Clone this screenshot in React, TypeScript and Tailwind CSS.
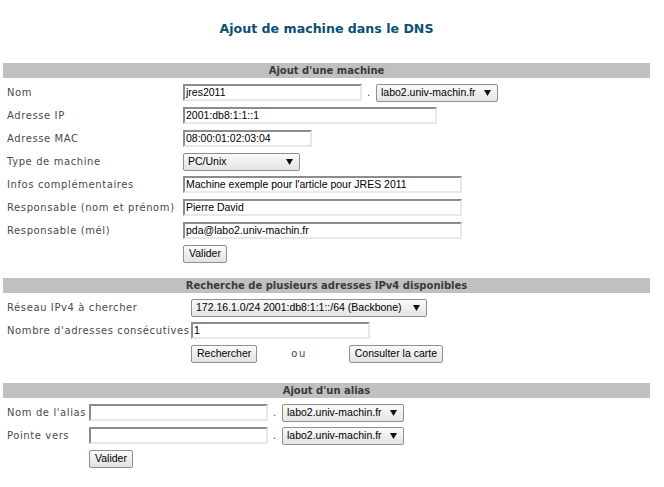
import React from "react";

const label = "text-[10px] tracking-[0.6px] text-[#4a4a4a] [font-family:'DejaVu_Sans',sans-serif]";
const field = "text-[10.5px] text-black [font-family:'Liberation_Sans',Arial,sans-serif]";

function Bar({ title, className = "" }: { title: string; className?: string }) {
  return (
    <div
      className={`h-[15px] bg-[#c0c0c0] text-center text-[10px] font-bold leading-[15px] text-[#3a3a3a] [font-family:'DejaVu_Sans',sans-serif] ${className}`}
    >
      {title}
    </div>
  );
}

function TextInput({ value = "", w }: { value?: string; w: string }) {
  return (
    <div
      className={`h-[17px] ${w} border-2 border-t-[#8c8c8c] border-l-[#8c8c8c] border-b-[#e8e8e8] border-r-[#e8e8e8] bg-white pl-[1px] leading-[13px] ${field}`}
    >
      {value}
    </div>
  );
}

function Select({ value, w }: { value: string; w: string }) {
  return (
    <div
      className={`flex h-[18px] ${w} items-center justify-between rounded-[2px] border border-[#8f8f8f] bg-gradient-to-b from-[#fafafa] to-[#e4e4e4] pl-[4px] pr-[6px] ${field}`}
    >
      <span className="whitespace-nowrap">{value}</span>
      <svg width="7" height="6" viewBox="0 0 7 6" className="ml-[4px] shrink-0">
        <path d="M0 0H7L3.5 6Z" fill="#111" />
      </svg>
    </div>
  );
}

function Button({ text }: { text: string }) {
  return (
    <div
      className={`flex h-[18px] items-center rounded-[2px] border border-[#8f8f8f] bg-gradient-to-b from-[#fafafa] to-[#e2e2e2] px-[5px] ${field}`}
    >
      {text}
    </div>
  );
}

function Row({ name, col, children }: { name?: string; col: string; children: React.ReactNode }) {
  return (
    <div className="flex h-[23px] items-center">
      <div className={`${col} shrink-0 pl-[4px] whitespace-nowrap ${label}`}>{name}</div>
      <div className="flex items-center">{children}</div>
    </div>
  );
}

function Dot() {
  return <span className={`w-[14px] text-center ${label}`}>.</span>;
}

export default function App() {
  return (
    <div className="min-h-[487px] w-[664px] bg-white px-[3px]">
      <h1 className="w-[647px] pt-[21px] text-center text-[12.6px] font-bold leading-4 text-[#0b5070] [font-family:'DejaVu_Sans',sans-serif]">
        Ajout de machine dans le DNS
      </h1>

      <div className="mt-[26px] w-[647px]">
        <Bar title="Ajout d'une machine" />
        <div className="pt-[3px]">
          <Row name="Nom" col="w-[180px]">
            <TextInput value="jres2011" w="w-[179px]" />
            <Dot />
            <Select value="labo2.univ-machin.fr" w="w-[122px]" />
          </Row>
          <Row name="Adresse IP" col="w-[180px]">
            <TextInput value="2001:db8:1:1::1" w="w-[254px]" />
          </Row>
          <Row name="Adresse MAC" col="w-[180px]">
            <TextInput value="08:00:01:02:03:04" w="w-[129px]" />
          </Row>
          <Row name="Type de machine" col="w-[180px]">
            <Select value="PC/Unix" w="w-[117px]" />
          </Row>
          <Row name="Infos complémentaires" col="w-[180px]">
            <TextInput value="Machine exemple pour l'article pour JRES 2011" w="w-[279px]" />
          </Row>
          <Row name="Responsable (nom et prénom)" col="w-[180px]">
            <TextInput value="Pierre David" w="w-[279px]" />
          </Row>
          <Row name="Responsable (mél)" col="w-[180px]">
            <TextInput value="pda@labo2.univ-machin.fr" w="w-[279px]" />
          </Row>
          <Row col="w-[180px]">
            <Button text="Valider" />
          </Row>
        </div>
      </div>

      <div className="mt-[13px] w-[647px]">
        <Bar title="Recherche de plusieurs adresses IPv4 disponibles" />
        <div className="pt-[3px]">
          <Row name="Réseau IPv4 à chercher" col="w-[188px]">
            <Select value="172.16.1.0/24 2001:db8:1:1::/64 (Backbone)" w="w-[236px]" />
          </Row>
          <Row name="Nombre d'adresses consécutives" col="w-[188px]">
            <TextInput value="1" w="w-[179px]" />
          </Row>
          <Row col="w-[188px]">
            <Button text="Rechercher" />
            <span className={`ml-[34px] tracking-[1.5px] ${label}`}>ou</span>
            <span className="ml-[42px]">
              <Button text="Consulter la carte" />
            </span>
          </Row>
        </div>
      </div>

      <div className="mt-[18px] w-[647px]">
        <Bar title="Ajout d'un alias" />
        <div className="pt-[3px]">
          <Row name="Nom de l'alias" col="w-[86px]">
            <TextInput w="w-[179px]" />
            <Dot />
            <Select value="labo2.univ-machin.fr" w="w-[122px]" />
          </Row>
          <Row name="Pointe vers" col="w-[86px]">
            <TextInput w="w-[179px]" />
            <Dot />
            <Select value="labo2.univ-machin.fr" w="w-[122px]" />
          </Row>
          <Row col="w-[86px]">
            <Button text="Valider" />
          </Row>
        </div>
      </div>
    </div>
  );
}
